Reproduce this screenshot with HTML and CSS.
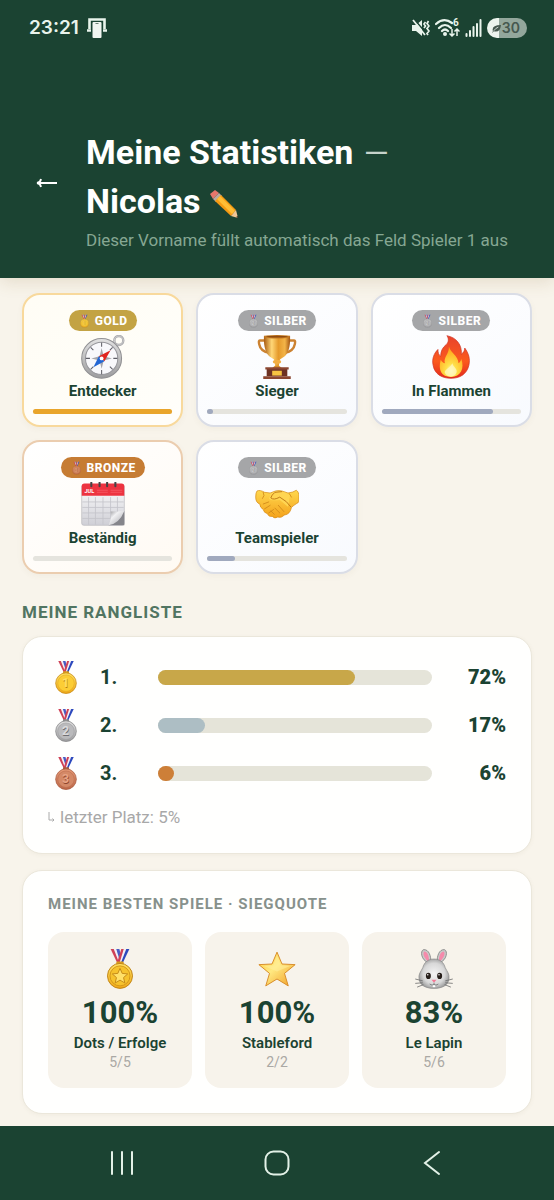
FILE: index.html
```html
<!DOCTYPE html>
<html lang="de">
<head>
<meta charset="utf-8">
<meta name="viewport" content="width=device-width, initial-scale=1">
<title>Meine Statistiken</title>
<link rel="stylesheet" href="styles.css">
</head>
<body>
<svg class="sprite" aria-hidden="true">
  <defs>
    <linearGradient id="gold" x1="0" y1="0" x2="0" y2="1"><stop offset="0" stop-color="#ffe263"/><stop offset="1" stop-color="#f0a818"/></linearGradient>
    <linearGradient id="silver" x1="0" y1="0" x2="0" y2="1"><stop offset="0" stop-color="#e2e2e2"/><stop offset="1" stop-color="#9c9c9e"/></linearGradient>
    <linearGradient id="bronze" x1="0" y1="0" x2="0" y2="1"><stop offset="0" stop-color="#e79c78"/><stop offset="1" stop-color="#bd6848"/></linearGradient>
    <linearGradient id="cup" x1="0" y1="0" x2="1" y2="0"><stop offset="0" stop-color="#a85a10"/><stop offset=".3" stop-color="#ffd777"/><stop offset=".55" stop-color="#e59a2b"/><stop offset=".8" stop-color="#f3b448"/><stop offset="1" stop-color="#a35411"/></linearGradient>
    <linearGradient id="fire" x1="0" y1="0" x2="0" y2="1"><stop offset="0" stop-color="#e8432c"/><stop offset=".6" stop-color="#fb5a1d"/><stop offset="1" stop-color="#e4291d"/></linearGradient>
    <radialGradient id="core" cx=".5" cy=".8" r=".75"><stop offset="0" stop-color="#fffbd0"/><stop offset=".3" stop-color="#ffe14a"/><stop offset="1" stop-color="#ffa318"/></radialGradient>
    <linearGradient id="paper" x1="0" y1="0" x2="0" y2="1"><stop offset="0" stop-color="#fdfdfd"/><stop offset="1" stop-color="#cfcfd6"/></linearGradient>
    <linearGradient id="curl" x1="0" y1="0" x2="1" y2="1"><stop offset="0" stop-color="#8d8d92"/><stop offset=".35" stop-color="#f1f1f3"/><stop offset="1" stop-color="#a2a2a8"/></linearGradient>
    <linearGradient id="hand" x1="0" y1="0" x2="0" y2="1"><stop offset="0" stop-color="#ffd84f"/><stop offset="1" stop-color="#f4a21b"/></linearGradient>
    <radialGradient id="fur" cx=".5" cy=".5" r=".55"><stop offset="0" stop-color="#f4f4f4"/><stop offset=".65" stop-color="#d8d8d8"/><stop offset="1" stop-color="#959595"/></radialGradient>
    <linearGradient id="star" x1="0" y1="0" x2="1" y2="1"><stop offset="0" stop-color="#ffc93b"/><stop offset=".45" stop-color="#ffe981"/><stop offset="1" stop-color="#f19b21"/></linearGradient>

    <symbol id="ribbon" viewBox="0 0 64 64">
      <path d="M17 0h6l11 23h-6z" fill="#cf4156"/><path d="M22 0h4l9 23h-4z" fill="#f4f0f5"/><path d="M26 0h5l6 23h-4z" fill="#4a5cc4"/>
      <path d="M47 0h-7L30 23h6z" fill="#2c49bd"/><path d="M42 0h-4L29 23h4z" fill="#f4f0f5"/><path d="M38 0h-4l-7 23h4z" fill="#cf4156"/>
    </symbol>
    <symbol id="medal-1" viewBox="0 0 64 64">
      <use href="#ribbon"/><rect x="26" y="20" width="12" height="5" rx="2" fill="#d99a1b"/>
      <circle cx="32" cy="43" r="20" fill="url(#gold)" stroke="#c68913" stroke-width="1.5"/><circle cx="32" cy="43" r="16" fill="#fccd35" stroke="#dea622" stroke-width="1"/>
      <text x="32" y="52" class="medal-digit" fill="#b77c12">1</text><text x="31" y="51" class="medal-digit" fill="#ffdf63">1</text>
    </symbol>
    <symbol id="medal-2" viewBox="0 0 64 64">
      <use href="#ribbon"/><rect x="26" y="20" width="12" height="5" rx="2" fill="#8b8b8d"/>
      <circle cx="32" cy="43" r="20" fill="url(#silver)" stroke="#858587" stroke-width="1.5"/><circle cx="32" cy="43" r="16" fill="#bababc" stroke="#9a9a9c" stroke-width="1"/>
      <text x="32" y="52" class="medal-digit" fill="#6f6f72">2</text><text x="31" y="51" class="medal-digit" fill="#dadadc">2</text>
    </symbol>
    <symbol id="medal-3" viewBox="0 0 64 64">
      <use href="#ribbon"/><rect x="26" y="20" width="12" height="5" rx="2" fill="#a9583b"/>
      <circle cx="32" cy="43" r="20" fill="url(#bronze)" stroke="#a8583b" stroke-width="1.5"/><circle cx="32" cy="43" r="16" fill="#d48967" stroke="#b7674a" stroke-width="1"/>
      <text x="32" y="52" class="medal-digit" fill="#8c452c">3</text><text x="31" y="51" class="medal-digit" fill="#e7a485">3</text>
    </symbol>
    <symbol id="medal-star" viewBox="0 0 64 64">
      <use href="#ribbon"/><rect x="26" y="20" width="12" height="5" rx="2" fill="#d99a1b"/>
      <circle cx="32" cy="43" r="20" fill="url(#gold)" stroke="#bd8114" stroke-width="1.5"/><circle cx="32" cy="43" r="16" fill="#f6c22d" stroke="#d29519" stroke-width="1.5"/>
      <path d="M32 31l3.5 8 8.8.9-6.6 5.8 2 8.6L32 49.800l-7.700 4.500 2-8.600-6.600-5.800 8.800-.9z" fill="#ffe069" stroke="#c28716" stroke-width="1.500"/>
    </symbol>
    <symbol id="compass" viewBox="0 0 64 64">
      <circle cx="55" cy="8" r="6.500" fill="none" stroke="#a7a7aa" stroke-width="3.500"/><circle cx="55" cy="8" r="6.500" fill="none" stroke="#dededf" stroke-width="1"/>
      <path d="M45 12l7 7" stroke="#8c8c8f" stroke-width="5"/>
      <circle cx="30" cy="34" r="29" fill="url(#silver)" stroke="#919194" stroke-width="1.500"/>
      <circle cx="30" cy="34" r="23.500" fill="#f8f8fb" stroke="#98989d" stroke-width="1.500"/>
      <path d="M30 11v6M30 51v6M7 34h6M47 34h6M14 18l4 4M42 46l4 4M14 50l4-4M42 22l4-4" stroke="#5e5e66" stroke-width="1.500"/>
      <path d="M30 19l3 12 12 3-12 3-3 12-3-12-12-3 12-3z" fill="#a5a5ab"/>
      <path d="M43 22L34 38l-8-7z" fill="#e1251f"/><path d="M18 47l8-16 8 7z" fill="#2366d4"/><circle cx="30" cy="34" r="2.800" fill="#fff"/>
    </symbol>
    <symbol id="trophy" viewBox="0 0 64 64">
      <path d="M15 8H7q-2 0-1 5 2 11 15 13M49 8h8q2 0 1 5-2 11-15 13" fill="none" stroke="#cc8231" stroke-width="3.500"/>
      <path d="M13 1h38q1 26-11 32-4 2-5 5v7h-6v-7q-1-3-5-5Q12 27 13 1z" fill="url(#cup)"/>
      <ellipse cx="32" cy="2.500" rx="19" ry="2.500" fill="#c47a22"/><ellipse cx="32" cy="2.300" rx="16" ry="1.200" fill="#8e4a10"/>
      <ellipse cx="32" cy="39" rx="6" ry="3" fill="#f2ae42"/><path d="M24 49q8-9 16 0z" fill="#d58b2b"/>
      <path d="M17 48h30v12H17z" fill="#6d3224"/><path d="M15 47h34v3H15zM12 60h40v4H12z" fill="#8b4630"/><rect x="25" y="52" width="14" height="7" fill="#f6c443"/>
    </symbol>
    <symbol id="flame" viewBox="0 0 64 64">
      <path d="M26 1c15 3 22 14 21 27 3-2 5-5 5-9 6 8 8 16 6 25-3 13-13 19-26 19S8 57 6 44c-2-9 1-17 7-23 0 5 1 8 4 10 0-8 3-13 8-17 4-4 4-9 1-13z" fill="url(#fire)" stroke="#cf3020" stroke-width="1"/>
      <path d="M29 17c3 9 13 13 14 24 2-1 3-3 4-6 5 14-1 26-15 26S13 51 17 36c2 3 4 5 6 5-2-9 6-13 6-24z" fill="url(#core)"/>
      <path d="M34 41c2 7 8 8 6 14-2 7-15 7-17 0-1-5 7-6 11-14z" fill="#fff8bd" opacity=".8"/>
    </symbol>
    <symbol id="calendar" viewBox="0 0 64 64">
      <rect x="1" y="4" width="62" height="59" rx="3" fill="url(#paper)" stroke="#b9b9be"/>
      <path d="M1 20V6q0-4 4-4h54q4 0 4 4v14z" fill="#ed3340"/>
      <path d="M2 29h60M2 37h60M2 45h60M2 53h60M11 22v40M21 22v40M32 22v40M43 22v40M53 22v40" stroke="#c3c3ca" stroke-width="1.200"/>
      <text x="5" y="16" class="month">JUL</text>
      <path d="M23 12h16M43 12h17M23 15h16M43 15h17" stroke="#f7626a" stroke-width="1"/>
      <path d="M63 42v21H40z" fill="#85858b"/><path d="M63 42q-10 1-20 1 2 10-3 20 16-3 23-21z" fill="url(#curl)"/>
      <path d="M15 1v5M27 1v5M38 1v5M50 1v5" stroke="#444" stroke-width="3" stroke-linecap="round"/>
    </symbol>
    <symbol id="handshake" viewBox="0 0 64 64">
      <path d="M3 13q4-2 11 2l8 1 8-3q5-1 9 0l9 3q8-1 12-4 4 2 4 10 0 9-3 9-5 3-8 6-2 10-10 11-5 5-10 3-4 3-8-1-5 1-7-4-5-1-6-6-5-3-5-8-6-2-6-10 0-7 2-9z" fill="url(#hand)" stroke="#d58a16" stroke-width="1"/>
      <path d="M22 17l10-4q5-1 9 1l10 5-3 17-12-10q-8 1-13 0-5-2-1-5z" fill="#ffd552"/>
      <path d="M39 14l-10 1q-5 4-6 8 4 4 13-1 11 6 16 14" fill="none" stroke="#ba7212" stroke-width="1.300" stroke-linecap="round"/>
      <path d="M34 34l8 9M29 38l7 7M23 42l5 5M12 32l8-3M14 39l8-5M20 45l7-5M12 15q3 5-1 9M50 17l3 5" fill="none" stroke="#cf8718" stroke-width="1.200" stroke-linecap="round"/>
    </symbol>
    <symbol id="star-icon" viewBox="0 0 64 64">
      <path d="M32 5l8 19 21 1-17 14 6 20-18-11-18 11 6-20L3 25l21-1z" fill="url(#star)" stroke="#d68a25" stroke-width="1.500" stroke-linejoin="round"/>
      <path d="M32 10l6 16 15 1-21 9-21-9 15-1z" fill="#fff1a2" opacity=".5"/>
    </symbol>
    <symbol id="rabbit" viewBox="0 0 64 64">
      <path d="M23 22C10 17 10 1 16 1c8 0 11 10 11 19M41 22C54 17 54 1 48 1c-8 0-11 10-11 19" fill="#c9c9c9" stroke="#8b8b8b" stroke-width="1.500"/>
      <path d="M22 19C14 13 14 4 17 4c5 1 7 8 7 14M42 19c8-6 8-15 5-15-5 1-7 8-7 14" fill="#f58aab"/>
      <path d="M32 16c10 0 16 6 18 14 3 6 7 10 6 17-1 12-12 16-24 16S9 59 8 47c-1-7 3-11 6-17 2-8 8-14 18-14z" fill="url(#fur)" stroke="#858585" stroke-width="1"/>
      <ellipse cx="23" cy="43" rx="4" ry="5" fill="#261e1a"/><ellipse cx="41" cy="43" rx="4" ry="5" fill="#261e1a"/><circle cx="22" cy="41" r="1.200" fill="#fff"/><circle cx="40" cy="41" r="1.200" fill="#fff"/>
      <path d="M28 49h8l-4 5z" fill="#f37895"/><path d="M32 54v3M25 56q4 3 7 1 3 2 7-1" fill="none" stroke="#666" stroke-width="1.200"/><path d="M30 58h4v3h-4z" fill="#fff"/>
      <path d="M2 48l12 3M2 55l12-1M5 61l10-4M62 48l-12 3M62 55l-12-1M59 61l-10-4" stroke="#6e6e6e" stroke-width="1.300"/>
    </symbol>
  </defs>
</svg>

<header class="top">
  <div class="status">
    <div class="status-group">
      <span class="clock">23:21</span>
      <svg class="cast" viewBox="0 0 20 20" aria-hidden="true"><path d="M2.500 11V1.500h15V11M0 12.500h4M16 12.500h4" fill="none" stroke="#e9f4ec" stroke-width="2.600"/><rect x="4.500" y="3" width="11" height="17" fill="#1b4332"/><rect x="5.500" y="4" width="9" height="16" rx="1" fill="#f1f5f1"/><path d="M8.500 5.500h3" stroke="#6b8175"/></svg>
    </div>
    <div class="status-group status-icons">
      <svg class="mute" viewBox="0 0 18 18" aria-hidden="true"><path d="M0 6h4l6-5v16l-6-5H0z" fill="#e9f4ec"/><path d="M2 0l12 14" stroke="#1b4332" stroke-width="1.500"/><path d="M1 1l12 15" stroke="#e9f4ec" stroke-width="1.800"/><path d="M13.500 3l-1.500 2 1.500 2-1.500 2M16.500 2L15 4.500 17 7l-2 2.500 2 2.500-2 2.500 1 1.500" fill="none" stroke="#e9f4ec" stroke-width="1.700"/></svg>
      <svg class="wifi" viewBox="0 0 25 20" aria-hidden="true"><path d="M1 6q8-7 16-1M4 10q6-6 12 0M7 13q3-3 6 0" fill="none" stroke="#e9f4ec" stroke-width="2.200" stroke-linecap="round"/><circle cx="10" cy="16" r="2" fill="#e9f4ec"/><text x="18" y="8" class="wifi-gen">6</text><path d="M17 11v7M14.500 15.500l2.500 2.500 2.500-2.500M22 18v-7M19.500 13.500L22 11l2.500 2.500" fill="none" stroke="#e9f4ec" stroke-width="1.500"/></svg>
      <svg class="signal" viewBox="0 0 17 18" aria-hidden="true"><path d="M1.500 17v-2M5 17v-5M8.500 17V8M12 17V5M15.500 17V1" stroke="#e9f4ec" stroke-width="2" stroke-linecap="round"/></svg>
      <div class="battery"><svg viewBox="0 0 10 10" aria-hidden="true"><path d="M1 8Q-1 1 10 1 9 10 2 8L0 10z" fill="#46584f"/><path d="M2 7.500q2-3 5-4" fill="none" stroke="#dfe8e2"/></svg><span>30</span></div>
    </div>
  </div>
  <div class="heading">
    <button class="back" type="button" aria-label="Zurück"><svg viewBox="0 0 22 12" aria-hidden="true"><path d="M21 6H1M5 2Q4.500 5.500 1 6q3.500.5 4 4" fill="none" stroke="#fff" stroke-width="1.800"/></svg></button>
    <div>
      <h1>Meine Statistiken <span class="dash">—</span><br>Nicolas <button class="edit" type="button" aria-label="Vorname bearbeiten"><svg viewBox="0 0 30 30" aria-hidden="true"><path d="M1 5l5-4 4 3-6 6z" fill="#e5766b"/><path d="M4 10l6-6 3 3-6 6z" fill="#b9a8a0"/><path d="M6 12l6-6 15 15-5 6z" fill="#f59a13"/><path d="M8 10l3-3 15 15-3 3z" fill="#ffbd35"/><path d="M22 27l5-6 2 8z" fill="#f2c795"/><path d="M27 28l2-1 0 2z" fill="#3b2b22"/></svg></button></h1>
      <p class="subtitle">Dieser Vorname füllt automatisch das Feld Spieler 1 aus</p>
    </div>
  </div>
</header>

<main class="content">
  <section class="awards" aria-label="Auszeichnungen">
    <article class="award award-gold"><span class="tier"><svg aria-hidden="true"><use href="#medal-1"/></svg>GOLD</span><svg class="award-icon" aria-hidden="true"><use href="#compass"/></svg><h2>Entdecker</h2><div class="track"><div class="fill" style="width:100%"></div></div></article>
    <article class="award award-silver"><span class="tier"><svg aria-hidden="true"><use href="#medal-2"/></svg>SILBER</span><svg class="award-icon" aria-hidden="true"><use href="#trophy"/></svg><h2>Sieger</h2><div class="track"><div class="fill" style="width:4%"></div></div></article>
    <article class="award award-silver"><span class="tier"><svg aria-hidden="true"><use href="#medal-2"/></svg>SILBER</span><svg class="award-icon" aria-hidden="true"><use href="#flame"/></svg><h2>In Flammen</h2><div class="track"><div class="fill" style="width:80%"></div></div></article>
    <article class="award award-bronze"><span class="tier"><svg aria-hidden="true"><use href="#medal-3"/></svg>BRONZE</span><svg class="award-icon" aria-hidden="true"><use href="#calendar"/></svg><h2>Beständig</h2><div class="track"><div class="fill" style="width:0%"></div></div></article>
    <article class="award award-silver"><span class="tier"><svg aria-hidden="true"><use href="#medal-2"/></svg>SILBER</span><svg class="award-icon" aria-hidden="true"><use href="#handshake"/></svg><h2>Teamspieler</h2><div class="track"><div class="fill" style="width:20%"></div></div></article>
  </section>

  <h2 class="section-title">MEINE RANGLISTE</h2>
  <section class="panel ranking">
    <div class="rank"><svg aria-hidden="true"><use href="#medal-1"/></svg><span>1.</span><div class="rank-track"><div class="rank-fill first" style="width:72%"></div></div><strong>72%</strong></div>
    <div class="rank"><svg aria-hidden="true"><use href="#medal-2"/></svg><span>2.</span><div class="rank-track"><div class="rank-fill second" style="width:17%"></div></div><strong>17%</strong></div>
    <div class="rank"><svg aria-hidden="true"><use href="#medal-3"/></svg><span>3.</span><div class="rank-track"><div class="rank-fill third" style="width:6%"></div></div><strong>6%</strong></div>
    <p class="last"><svg viewBox="0 0 7 10" aria-hidden="true"><path d="M1 0v8h5M4.500 6.500L6 8 4.500 9.500" fill="none" stroke="#aaa"/></svg>letzter Platz: 5%</p>
  </section>

  <section class="panel best">
    <h2>MEINE BESTEN SPIELE · SIEGQUOTE</h2>
    <div class="games">
      <article class="game"><svg aria-hidden="true"><use href="#medal-star"/></svg><strong>100%</strong><h3>Dots / Erfolge</h3><p>5/5</p></article>
      <article class="game"><svg aria-hidden="true"><use href="#star-icon"/></svg><strong>100%</strong><h3>Stableford</h3><p>2/2</p></article>
      <article class="game"><svg aria-hidden="true"><use href="#rabbit"/></svg><strong>83%</strong><h3>Le Lapin</h3><p>5/6</p></article>
    </div>
  </section>
</main>

<nav class="system-nav" aria-label="Systemnavigation">
  <button type="button" aria-label="Letzte Apps"><svg viewBox="0 0 26 26" aria-hidden="true"><path d="M3 2v22M13 2v22M23 2v22"/></svg></button>
  <button type="button" aria-label="Startseite"><svg viewBox="0 0 26 26" aria-hidden="true"><rect x="1.500" y="1.500" width="23" height="23" rx="8"/></svg></button>
  <button type="button" aria-label="Zurück"><svg viewBox="0 0 26 26" aria-hidden="true"><path d="M20 2L6 13l14 11"/></svg></button>
</nav>
</body>
</html>
```
FILE: styles.css
```css
* {
  box-sizing: border-box;
}

body {
  margin: 0;
  min-height: 100vh;
  display: flex;
  flex-direction: column;
  background: #f8f4eb;
  color: #1b4332;
  font-family: Roboto, "Liberation Sans", sans-serif;
}

h1, h2, h3, p {
  margin: 0;
}

button {
  border: 0;
  padding: 0;
  background: none;
  font: inherit;
  cursor: pointer;
}

svg {
  display: block;
}

.sprite {
  position: absolute;
  width: 0;
  height: 0;
}

.medal-digit {
  font: 700 24px Roboto, sans-serif;
  text-anchor: middle;
}

.month {
  font: 700 8px Roboto, sans-serif;
  fill: #fff;
}

/* Header */

.top {
  padding-bottom: 24px;
  background: #1b4332;
  box-shadow: 0 4px 16px rgba(130, 100, 40, 0.16);
}

.status {
  height: 56px;
  padding: 0 27px 0 29px;
  display: flex;
  align-items: center;
  justify-content: space-between;
  color: #e9f4ec;
}

.status-group {
  display: flex;
  align-items: center;
  gap: 8px;
}

.status-icons {
  gap: 5px;
}

.clock {
  font: 600 19px/24px Inter, sans-serif;
}

.cast {
  width: 20px;
  height: 20px;
}

.mute {
  width: 18px;
  height: 18px;
}

.wifi {
  width: 25px;
  height: 20px;
}

.wifi-gen {
  font: 700 10px Roboto, sans-serif;
  fill: #e9f4ec;
}

.signal {
  width: 17px;
  height: 18px;
}

.battery {
  width: 40px;
  height: 20px;
  padding: 0 7px 0 5px;
  display: flex;
  align-items: center;
  justify-content: space-between;
  border-radius: 10px;
  background: linear-gradient(90deg, #edf4ee 30%, #93a79c 30%);
  color: #46584f;
  font: 600 14px/20px Inter, sans-serif;
}

.battery svg {
  width: 9px;
  height: 9px;
}

.heading {
  padding: 72px 36px 0;
  display: flex;
  align-items: center;
  gap: 28px;
}

.back {
  padding-bottom: 17px;
}

.back svg {
  width: 22px;
  height: 12px;
}

h1 {
  color: #fff;
  font-size: 34px;
  line-height: 49px;
  font-weight: 700;
}

.dash {
  padding-left: 2px;
  color: #c6d3cb;
  font-size: 32px;
  line-height: 32px;
  font-weight: 400;
}

.edit {
  line-height: 30px;
  vertical-align: middle;
}

.edit svg {
  width: 30px;
  height: 30px;
}

.subtitle {
  color: #86a793;
  font-size: 17px;
  line-height: 28px;
}

/* Awards */

.content {
  flex: 1;
  padding: 15px 22px 12px;
}

.awards {
  display: grid;
  grid-template-columns: repeat(3, 1fr);
  gap: 13px;
}

.award {
  padding: 15px 9px 11px;
  display: flex;
  flex-direction: column;
  align-items: center;
  border: 2px solid;
  border-radius: 18px;
  box-shadow: 0 2px 6px rgba(120, 100, 60, 0.05);
}

.award-gold {
  border-color: #f8d99c;
  background: linear-gradient(135deg, #fffdf5, #fffefa);
}

.award-silver {
  border-color: #dadde6;
  background: linear-gradient(145deg, #ffffff, #f8fafe);
}

.award-bronze {
  border-color: #ebcdaf;
  background: linear-gradient(145deg, #ffffff, #fffaf3);
}

.tier {
  height: 21px;
  padding: 0 9px;
  display: flex;
  align-items: center;
  gap: 4px;
  border-radius: 11px;
  color: #fff;
  font-size: 12px;
  font-weight: 800;
  letter-spacing: 0.5px;
}

.tier svg {
  width: 13px;
  height: 14px;
  opacity: 0.85;
}

.award-gold .tier {
  background: #c3a344;
}

.award-silver .tier {
  background: #a5a6a8;
}

.award-bronze .tier {
  background: #c67c33;
}

.award-icon {
  width: 44px;
  height: 44px;
  margin-top: 4px;
}

.award h2 {
  margin: 2px 0 8px;
  font-size: 15px;
  line-height: 20px;
}

.track {
  width: 100%;
  height: 5px;
  border-radius: 3px;
  background: #e5e4de;
}

.fill {
  height: 5px;
  border-radius: 3px;
  background: #a0a9be;
}

.award-gold .fill {
  background: #e9a52b;
}

/* Ranking */

.section-title {
  margin: 26px 0 12px;
  color: #517562;
  font-size: 17px;
  line-height: 24px;
  letter-spacing: 1px;
}

.panel {
  padding: 0 25px;
  border: 1px solid #ebe7db;
  border-radius: 20px;
  background: #fffffe;
  box-shadow: 0 1px 4px rgba(120, 100, 60, 0.06);
}

.ranking {
  padding-top: 16px;
  padding-bottom: 24px;
}

.rank {
  height: 48px;
  display: grid;
  grid-template-columns: 36px 42px 1fr 58px;
  column-gap: 16px;
  align-items: center;
  font-size: 20px;
  font-weight: 700;
}

.rank svg {
  width: 36px;
  height: 33px;
}

.rank strong {
  text-align: right;
}

.rank-track {
  height: 15px;
  border-radius: 8px;
  background: #e5e4d9;
}

.rank-fill {
  height: 15px;
  border-radius: 8px;
}

.first {
  background: #c8a749;
}

.second {
  background: #adbec4;
}

.third {
  background: #cd7f38;
}

.last {
  margin-top: 8px;
  display: flex;
  align-items: center;
  gap: 5px;
  color: #a8a8a8;
  font-size: 17px;
  line-height: 24px;
}

.last svg {
  width: 7px;
  height: 10px;
}

/* Best games */

.best {
  margin-top: 16px;
  padding-top: 23px;
  padding-bottom: 25px;
}

.best > h2 {
  margin-bottom: 18px;
  color: #87918c;
  font-size: 15px;
  line-height: 20px;
  letter-spacing: 1px;
}

.games {
  display: grid;
  grid-template-columns: repeat(3, 1fr);
  gap: 13px;
}

.game {
  padding: 17px 8px;
  display: flex;
  flex-direction: column;
  align-items: center;
  border-radius: 16px;
  background: #f7f3eb;
}

.game svg {
  width: 40px;
  height: 40px;
}

.game strong {
  margin-top: 6px;
  font-size: 31px;
  line-height: 36px;
}

.game h3 {
  margin-top: 2px;
  font-size: 15px;
  line-height: 20px;
  font-weight: 600;
}

.game p {
  color: #aaa8a4;
  font-size: 14px;
  line-height: 18px;
}

/* System navigation */

.system-nav {
  height: 74px;
  padding: 0 44px;
  display: grid;
  grid-template-columns: repeat(3, 1fr);
  align-items: center;
  justify-items: center;
  background: #1b4332;
}

.system-nav svg {
  width: 26px;
  height: 26px;
  fill: none;
  stroke: #e3f1e7;
  stroke-width: 2;
  stroke-linecap: round;
}
```
